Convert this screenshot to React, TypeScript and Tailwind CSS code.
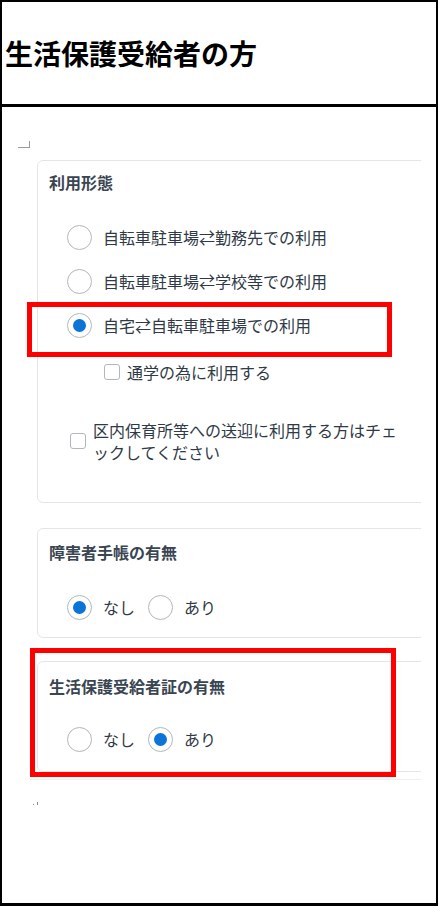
import React from "react";

const font = { fontFamily: '"Noto Sans CJK JP", "Noto Sans", sans-serif' };

function Radio({ checked }: { checked?: boolean }) {
  return (
    <span className="flex h-[25px] w-[25px] shrink-0 items-center justify-center rounded-full border-[1.5px] border-[#b3b7bb] bg-white">
      {checked && <span className="h-[13px] w-[13px] rounded-full bg-[#0b74d6]" />}
    </span>
  );
}

function Checkbox() {
  return <span className="h-[16px] w-[16px] shrink-0 rounded-[3px] border-[1.5px] border-[#b3b7bb] bg-white" />;
}

function RadioRow({ label, checked }: { label: string; checked?: boolean }) {
  return (
    <div className="flex h-[44px] items-center gap-[11px] pl-[18px]">
      <Radio checked={checked} />
      <span className="text-[16px] leading-[22px] text-[#2f3a46]">{label}</span>
    </div>
  );
}

function YesNo({ value }: { value: "none" | "yes" }) {
  return (
    <div className="flex h-[28px] items-center pl-[18px] text-[16px] text-[#2f3a46]">
      <label className="mr-[13px] flex items-center gap-[11px]">
        <Radio checked={value === "none"} />
        <span>なし</span>
      </label>
      <label className="flex items-center gap-[11px]">
        <Radio checked={value === "yes"} />
        <span>あり</span>
      </label>
    </div>
  );
}

export default function App() {
  return (
    <div className="relative h-[906px] w-[446px] bg-white" style={font}>
      <div className="flex h-[906px] w-[438px] flex-col border-2 border-b-[3px] border-black">
        <header className="flex h-[105px] shrink-0 items-center border-b-[3px] border-black pl-[3px]">
          <h1 className="text-[28px] font-bold leading-none text-black">生活保護受給者の方</h1>
        </header>

        <div className="ml-[16px] mt-[34px] h-[7px] w-[12px] border-b border-r border-[#9a9a9a]" />

        <div className="ml-[35px] mt-[12px] w-[384px] overflow-hidden">
          <section className="w-[420px] rounded-md border border-[#e3e5e8] pb-[39px] pl-[11px] pt-[11px]">
            <p className="text-[16px] font-bold leading-5 text-[#3a4552]">利用形態</p>
            <div className="mt-[23px]">
              <RadioRow label="自転車駐車場⇄勤務先での利用" />
              <RadioRow label="自転車駐車場⇄学校等での利用" />
              <RadioRow label="自宅⇄自転車駐車場での利用" checked />
            </div>
            <div className="mt-[13px] flex h-6 items-center gap-[7px] pl-[55px] text-[16px] text-[#2f3a46]">
              <Checkbox />
              <span>通学の為に利用する</span>
            </div>
            <div className="mt-[35px] flex items-center gap-[7px] pl-[21px] text-[16px] leading-[22px] text-[#2f3a46]">
              <Checkbox />
              <span className="max-w-[312px]">区内保育所等への送迎に利用する方はチェックしてください</span>
            </div>
          </section>

          <section className="mt-[25px] w-[420px] rounded-md border border-[#e3e5e8] pb-[16px] pl-[11px] pt-[13px]">
            <p className="text-[16px] font-bold leading-5 text-[#3a4552]">障害者手帳の有無</p>
            <div className="mt-[31px]">
              <YesNo value="none" />
            </div>
          </section>

          <section className="mt-[23px] w-[420px] rounded-md border border-[#e3e5e8] pb-[18px] pl-[11px] pt-[14px]">
            <p className="text-[16px] font-bold leading-5 text-[#3a4552]">生活保護受給者証の有無</p>
            <div className="mt-[29px]">
              <YesNo value="yes" />
            </div>
          </section>
        </div>

        <div className="ml-[28px] mt-[7px] h-px w-[391px] bg-[#eceef0]" />

        <div className="ml-[31px] mt-[22px] flex items-end gap-[3px]">
          <span className="h-px w-px bg-[#8a8a8a]" />
          <span className="h-[3px] w-px bg-[#8a8a8a]" />
        </div>
      </div>

      <div className="absolute left-[27px] top-[302px] h-[55px] w-[365px] border-[5px] border-[#ff0000]" />
      <div className="absolute left-[30px] top-[648px] h-[129px] w-[366px] border-[5px] border-[#ff0000]" />
    </div>
  );
}
